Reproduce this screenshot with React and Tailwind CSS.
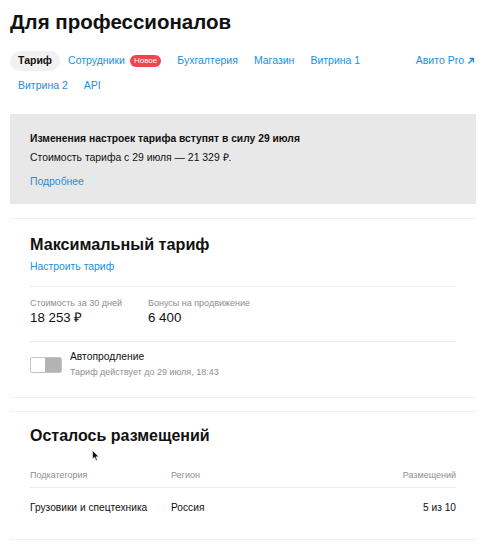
import React from "react";

const tabs1 = [
  { label: "Тариф", active: true },
  { label: "Сотрудники", badge: "Новое" },
  { label: "Бухгалтерия" },
  { label: "Магазин" },
  { label: "Витрина 1" },
];

function Tab({ label, active, badge }) {
  if (active) {
    return (
      <div className="h-[20px] px-[8px] rounded-full bg-[#f1f1f1] flex items-center text-[10.5px] font-bold text-[#111]">
        {label}
      </div>
    );
  }
  return (
    <div className="h-[20px] px-[8px] flex items-center gap-[5px] text-[10.5px] text-[#1a8fdf]">
      <span>{label}</span>
      {badge && (
        <span className="h-[12px] px-[4px] rounded-full bg-[#f2444f] text-white text-[8px] leading-[12px]">
          {badge}
        </span>
      )}
    </div>
  );
}

export default function App() {
  return (
    <div className="relative w-[486px] h-[552px] overflow-hidden bg-white text-[#111] font-['Liberation_Sans',Arial,sans-serif]">
      <div className="px-[10px] pt-[8px]">
        <h1 className="text-[20.5px] leading-[28px] font-bold">Для профессионалов</h1>

        <div className="mt-[15px] flex justify-between items-start">
          <div className="flex flex-col gap-[5px]">
            <div className="flex items-center">
              {tabs1.map((t) => (
                <Tab key={t.label} {...t} />
              ))}
            </div>
            <div className="flex items-center">
              <Tab label="Витрина 2" />
              <Tab label="API" />
            </div>
          </div>
          <div className="h-[20px] flex items-center gap-[3px] text-[10.5px] text-[#1a8fdf] pr-[1px]">
            <span>Авито Pro</span>
            <svg width="8" height="8" viewBox="0 0 8 8" fill="none" stroke="#1a8fdf" strokeWidth="1.3">
              <path d="M1.5 6.5 L6.5 1.5 M2.5 1.5 H6.5 V5.5" />
            </svg>
          </div>
        </div>

        <div className="mt-[18px] bg-[#e8e8e8] px-[20px] pt-[17px] pb-[14px]">
          <div className="text-[10.3px] leading-[16px] font-bold">
            Изменения настроек тарифа вступят в силу 29 июля
          </div>
          <div className="mt-[3px] text-[10.4px] leading-[16px]">
            Стоимость тарифа с 29 июля — 21 329 ₽.
          </div>
          <div className="mt-[8px] text-[10.4px] leading-[16px] text-[#1a8fdf]">Подробнее</div>
        </div>

        <div className="mt-[14px] border-y border-[#f0f0f0] px-[20px] pt-[13px] pb-[18px]">
          <div className="text-[16.2px] leading-[24px] font-bold">Максимальный тариф</div>
          <div className="mt-[3px] text-[10.4px] leading-[16px] text-[#1a8fdf]">Настроить тариф</div>
          <div className="mt-[11px] h-px bg-[#ececec]" />
          <div className="mt-[10px] flex">
            <div className="w-[118px]">
              <div className="text-[9px] leading-[12px] text-[#8f8f8f] whitespace-nowrap">Стоимость за 30 дней</div>
              <div className="text-[13.3px] leading-[18px]">18 253 ₽</div>
            </div>
            <div>
              <div className="text-[9px] leading-[12px] text-[#8f8f8f] whitespace-nowrap">Бонусы на продвижение</div>
              <div className="text-[13.3px] leading-[18px]">6 400</div>
            </div>
          </div>
          <div className="mt-[14px] h-px bg-[#ececec]" />
          <div className="mt-[8px] flex items-center gap-[8px]">
            <div className="w-[32px] h-[16px] rounded-[2px] border border-[#c4c4c4] flex overflow-hidden">
              <div className="w-[14px] h-full bg-white" />
              <div className="flex-1 h-full bg-[#b3b3b3]" />
            </div>
            <div>
              <div className="text-[10.3px] leading-[14px]">Автопродление</div>
              <div className="mt-[1px] text-[9px] leading-[14px] text-[#8f8f8f]">
                Тариф действует до 29 июля, 18:43
              </div>
            </div>
          </div>
        </div>

        <div className="mt-[13px] border-y border-[#f0f0f0] px-[20px] pt-[12px] pb-[23px]">
          <div className="text-[16px] leading-[24px] font-bold">Осталось размещений</div>
          <div className="mt-[20px] flex text-[9px] leading-[14px] text-[#8f8f8f]">
            <div className="w-[141px]">Подкатегория</div>
            <div className="flex-1">Регион</div>
            <div>Размещений</div>
          </div>
          <div className="mt-[5px] h-px bg-[#ececec]" />
          <div className="mt-[12px] flex text-[10.2px] leading-[16px]">
            <div className="w-[141px]">Грузовики и спецтехника</div>
            <div className="flex-1">Россия</div>
            <div>5 из 10</div>
          </div>
        </div>
      </div>

      <svg className="absolute left-[92px] top-[450px]" width="8" height="12" viewBox="0 0 8 12">
        <path d="M0.5 0.5 L0.5 9 L2.6 7.2 L4 10.5 L5.3 10 L4 6.8 L6.8 6.8 Z" fill="#111" stroke="#fff" strokeWidth="0.6" />
      </svg>
    </div>
  );
}
